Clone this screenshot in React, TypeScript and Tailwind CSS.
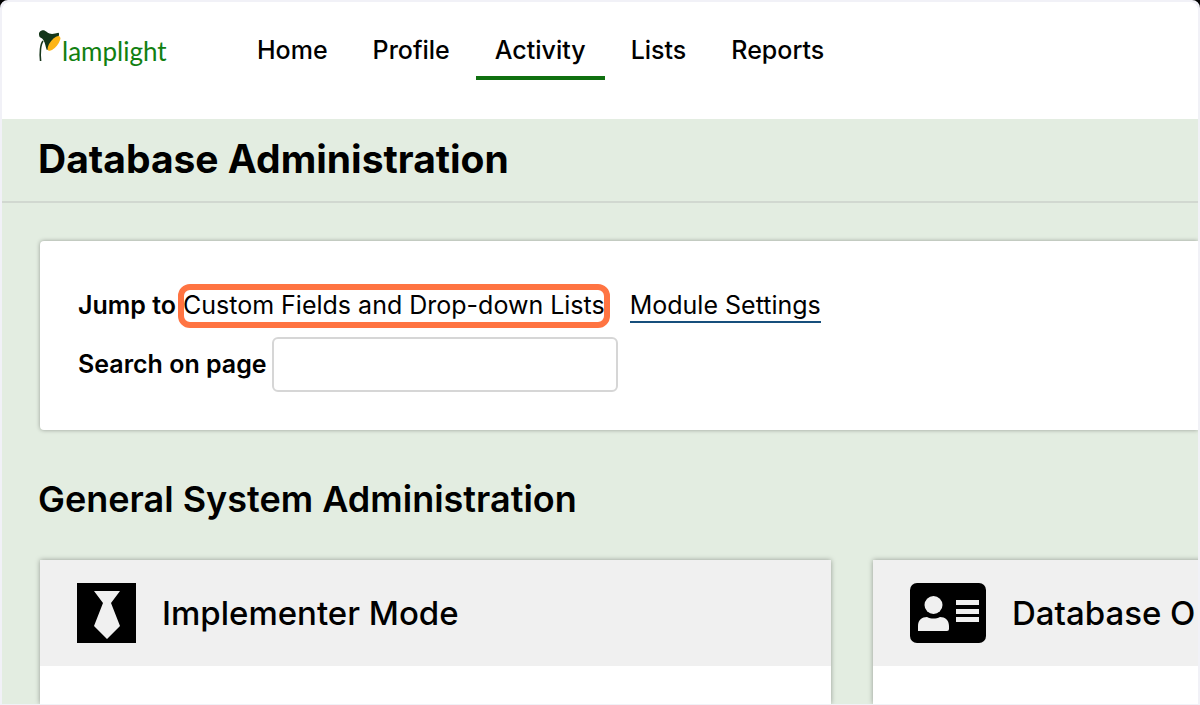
import React from "react";

const navItems = ["Home", "Profile", "Activity", "Lists", "Reports"];

function Logo() {
  return (
    <a href="#home" aria-label="lamplight" className="flex w-32 items-start">
      <svg viewBox="0 0 24 34" className="h-[34px] w-6 shrink-0" aria-hidden="true">
        <path d="M5 12C2.500 15 1.600 24 2.600 32" fill="none" stroke="#17361c" strokeWidth="1.600" />
        <path
          d="M1 5C.8 2.600 3.500 .8 6 1.200C8 1.800 9 3.800 11.500 4.600C14 5.200 17 4.800 20.500 3.800C22 5 20.500 9 16.500 14C13 18 10 21 8.800 21C7.600 18 7.400 14.500 5.600 11.500C4.600 9.500 3.600 9.400 2.400 8.600C1.200 7.800 1 6.500 1 5Z"
          fill="#14371a"
        />
        <ellipse cx="16" cy="14.400" rx="9" ry="3.700" transform="rotate(-51 16 14.400)" fill="#fdb515" />
      </svg>
      <span className="mt-1 font-['Lato',sans-serif] text-[26px] leading-9 text-[#118011]">lamplight</span>
    </a>
  );
}

function TieIcon() {
  return (
    <svg viewBox="0 0 59 60" className="h-[60px] w-[59px] shrink-0" aria-hidden="true">
      <rect width="59" height="60" />
      <path d="M17 8H43L34 20L43 43L30 56L17 43L26 20Z" fill="#f0f0f0" />
    </svg>
  );
}

function IdCardIcon() {
  return (
    <svg viewBox="0 0 76 60" className="h-[60px] w-[76px] shrink-0" aria-hidden="true">
      <rect width="76" height="60" rx="7" />
      <g fill="#f0f0f0">
        <circle cx="23.500" cy="22" r="9" />
        <path d="M8 48V43C8 37 12 34 17 34C21 36 26 36 30 34C35 34 39 37 39 43V46Q39 48 37 48Z" />
        <path d="M46 17H69V22H46ZM46 26H69V31H46ZM46 34H69V39H46Z" />
      </g>
    </svg>
  );
}

function SettingsCard({ icon, title }: { icon: React.ReactNode; title: string }) {
  return (
    <article className="flex flex-col bg-white shadow-[0_0_5px_rgba(0,0,0,0.35)]">
      <header className="flex h-[106px] items-center gap-[26px] bg-[#f0f0f0] px-[37px] pb-px">
        {icon}
        <h3 className="text-[33px] leading-10 font-medium whitespace-nowrap">{title}</h3>
      </header>
    </article>
  );
}

export default function App() {
  return (
    <div className="h-screen bg-black">
      <div className="flex h-full flex-col overflow-hidden rounded-t-lg border-2 border-b-1 border-[#f1f1f7] bg-[#f1f1f7] font-['Inter',sans-serif] text-black">
        <header className="flex h-[117px] shrink-0 items-start rounded-t-lg bg-white pl-9">
          <div className="pt-[27px]">
            <Logo />
          </div>
          <nav className="ml-[72px] flex gap-[7px] pt-6 text-[25px] font-medium">
            {navItems.map((item) => (
              <a
                key={item}
                href={`#${item.toLowerCase()}`}
                aria-current={item === "Activity" ? "page" : undefined}
                className="border-b-4 border-transparent px-[19px] pt-2 pb-[10px] leading-8 aria-[current=page]:border-[#107010]"
              >
                {item}
              </a>
            ))}
          </nav>
        </header>

        <main className="flex min-h-0 flex-1 flex-col bg-[#e3ede1]">
          <div className="h-[84px] shrink-0 border-b-2 border-[#d1d8d0] px-9 pt-4">
            <h1 className="text-[39px] leading-12 font-bold">Database Administration</h1>
          </div>

          <div className="flex min-h-0 flex-1 flex-col pt-[38px] pl-[38px]">
            <section className="h-[189px] shrink-0 rounded-l bg-white px-[38px] pt-[43px] text-[25px] shadow-[0_0_4px_rgba(0,0,0,0.35)]">
              <div className="flex h-11 items-center whitespace-nowrap">
                <span className="font-semibold">Jump to</span>
                <a
                  href="#custom-fields"
                  className="ml-0.5 -mr-0.5 flex h-11 items-center rounded-xl border-6 border-[#ff7442]"
                >
                  <span className="-mx-px">Custom Fields and Drop-down Lists</span>
                </a>
                <a href="#module-settings" className="ml-[22px] border-b-2 border-[#174f7c] leading-8">
                  Module Settings
                </a>
              </div>
              <div className="mt-[9px] flex items-center gap-[5px]">
                <label htmlFor="page-search" className="font-semibold">
                  Search on page
                </label>
                <input
                  id="page-search"
                  type="text"
                  className="h-[55px] w-[346px] rounded-md border-2 border-[#d6d6d6] bg-white px-3 outline-none"
                />
              </div>
            </section>

            <h2 className="mt-[45px] -ml-0.5 shrink-0 text-4xl leading-12 font-semibold">General System Administration</h2>

            <div className="mt-[37px] grid min-h-0 flex-1 grid-cols-[791px_791px] gap-[42px]">
              <SettingsCard icon={<TieIcon />} title="Implementer Mode" />
              <SettingsCard icon={<IdCardIcon />} title="Database O" />
            </div>
          </div>
        </main>
      </div>
    </div>
  );
}
